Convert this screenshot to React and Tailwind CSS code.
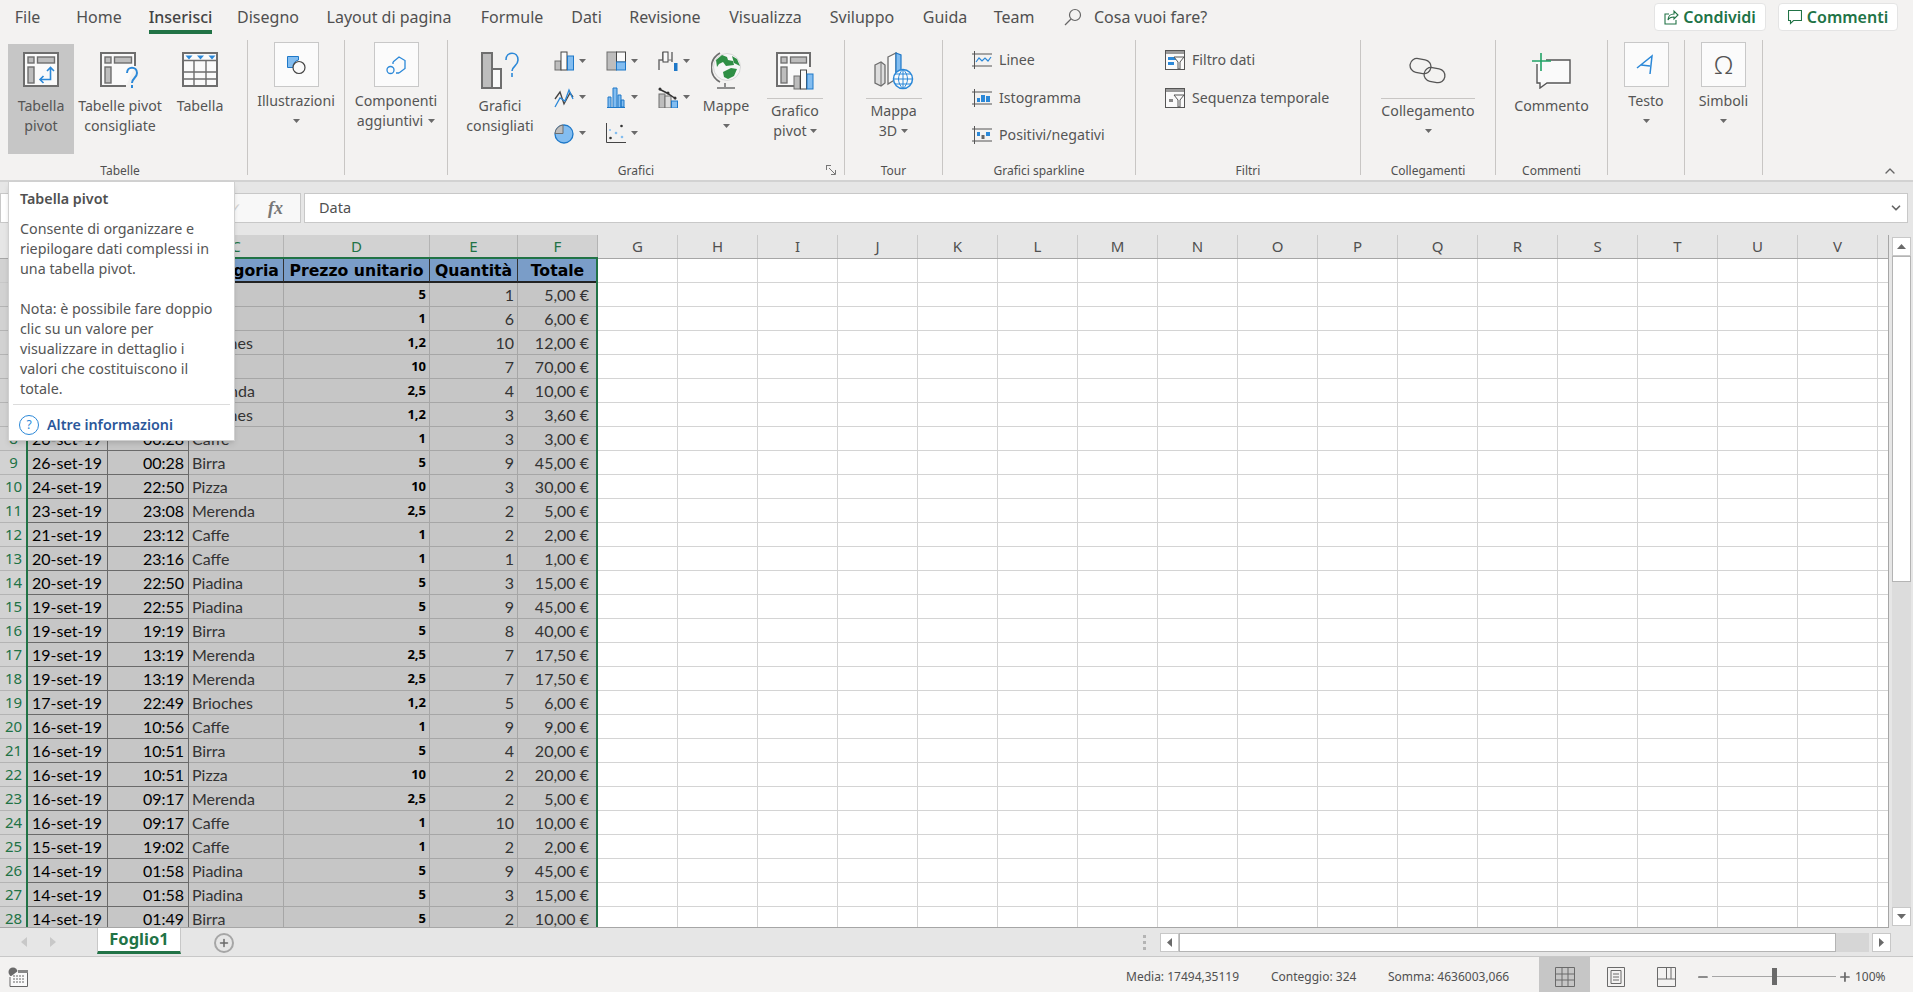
import { Plus, Minus, ChevronUp, ChevronDown } from 'lucide-react';

const GRAY = '#6e6e6e';
const LIGHT = '#bdbdbd';
const BLUE = '#1e78c8';
const SKY = '#83bdf0';

const tabs = [
  ['File', 'w-[55px]'],
  ['Home', 'w-[88px]'],
  ['Inserisci', 'w-[75px]'],
  ['Disegno', 'w-[100px]'],
  ['Layout di pagina', 'w-[142px]'],
  ['Formule', 'w-[104px]'],
  ['Dati', 'w-[45px]'],
  ['Revisione', 'w-[112px]'],
  ['Visualizza', 'w-[89px]'],
  ['Sviluppo', 'w-[104px]'],
  ['Guida', 'w-[62px]'],
  ['Team', 'w-[76px]'],
];

const rows = [
  ['', '', 'Birra', '5', '1', '5,00 €'],
  ['', '', 'Caffe', '1', '6', '6,00 €'],
  ['', '', 'Brioches', '1,2', '10', '12,00 €'],
  ['', '', 'Pizza', '10', '7', '70,00 €'],
  ['', '', 'Merenda', '2,5', '4', '10,00 €'],
  ['', '', 'Brioches', '1,2', '3', '3,60 €'],
  ['26-set-19', '00:28', 'Caffe', '1', '3', '3,00 €'],
  ['26-set-19', '00:28', 'Birra', '5', '9', '45,00 €'],
  ['24-set-19', '22:50', 'Pizza', '10', '3', '30,00 €'],
  ['23-set-19', '23:08', 'Merenda', '2,5', '2', '5,00 €'],
  ['21-set-19', '23:12', 'Caffe', '1', '2', '2,00 €'],
  ['20-set-19', '23:16', 'Caffe', '1', '1', '1,00 €'],
  ['20-set-19', '22:50', 'Piadina', '5', '3', '15,00 €'],
  ['19-set-19', '22:55', 'Piadina', '5', '9', '45,00 €'],
  ['19-set-19', '19:19', 'Birra', '5', '8', '40,00 €'],
  ['19-set-19', '13:19', 'Merenda', '2,5', '7', '17,50 €'],
  ['19-set-19', '13:19', 'Merenda', '2,5', '7', '17,50 €'],
  ['17-set-19', '22:49', 'Brioches', '1,2', '5', '6,00 €'],
  ['16-set-19', '10:56', 'Caffe', '1', '9', '9,00 €'],
  ['16-set-19', '10:51', 'Birra', '5', '4', '20,00 €'],
  ['16-set-19', '10:51', 'Pizza', '10', '2', '20,00 €'],
  ['16-set-19', '09:17', 'Merenda', '2,5', '2', '5,00 €'],
  ['16-set-19', '09:17', 'Caffe', '1', '10', '10,00 €'],
  ['15-set-19', '19:02', 'Caffe', '1', '2', '2,00 €'],
  ['14-set-19', '01:58', 'Piadina', '5', '9', '45,00 €'],
  ['14-set-19', '01:58', 'Piadina', '5', '3', '15,00 €'],
  ['14-set-19', '01:49', 'Birra', '5', '2', '10,00 €'],
];

const emptyCols = ['G', 'H', 'I', 'J', 'K', 'L', 'M', 'N', 'O', 'P', 'Q', 'R', 'S', 'T', 'U', 'V'];

const Caret = ({ className = '' }) => (
  <svg width="7" height="4" viewBox="0 0 7 4" className={`inline-block ${className}`}>
    <path d="M0 0h7L3.5 4z" fill="#6a6a6a" />
  </svg>
);

// ---- ribbon icons ----
const PivotIcon = () => (
  <svg width="36" height="36" viewBox="0 0 36 36" fill="none">
    <rect x="1" y="1" width="34" height="33" fill="#fafafa" stroke={GRAY} strokeWidth="2" />
    <rect x="5" y="5" width="6" height="6" fill={LIGHT} stroke={GRAY} strokeWidth="1.4" />
    <rect x="14.5" y="5" width="17" height="6" fill={LIGHT} stroke={GRAY} strokeWidth="1.4" />
    <rect x="5" y="15" width="6" height="16" fill={LIGHT} stroke={GRAY} strokeWidth="1.4" />
    <path d="M27.5 16v11.5H17M24 19l3.5-3.5L31 19M20.5 24L17 27.5l3.5 3.5" stroke="#2b88d8" strokeWidth="1.6" />
  </svg>
);

const PivotAskIcon = () => (
  <svg width="40" height="38" viewBox="0 0 40 38" fill="none">
    <path d="M35 14V1H1v33h25" fill="#fafafa" />
    <path d="M35 14V1H1v33h25" stroke={GRAY} strokeWidth="2" />
    <rect x="5" y="5" width="6" height="6" fill={LIGHT} stroke={GRAY} strokeWidth="1.4" />
    <rect x="14.5" y="5" width="17" height="6" fill={LIGHT} stroke={GRAY} strokeWidth="1.4" />
    <rect x="5" y="15" width="6" height="16" fill={LIGHT} stroke={GRAY} strokeWidth="1.4" />
    <path d="M27 21c0-7 10-7 10 0 0 5-5 5-5 10M32 33v3" stroke="#2b88d8" strokeWidth="2" />
  </svg>
);

const TableIcon = () => (
  <svg width="36" height="36" viewBox="0 0 36 36" fill="none">
    <rect x="1" y="1" width="34" height="33" fill="#fafafa" stroke={GRAY} strokeWidth="2" />
    <path d="M1 8.5h34M1 20h34M1 27h34M12 8.5V34M24 8.5V34" stroke={GRAY} strokeWidth="1.4" />
    <path d="M3.5 3.5h7l-3.5 4zM15 3.5h7l-3.5 4zM26.5 3.5h7l-3.5 4z" fill="#2b88d8" />
  </svg>
);

const ShapesIcon = () => (
  <svg width="20" height="20" viewBox="0 0 20 20" fill="none">
    <path d="M1.5 1.5h11v3.5a6 6 0 0 0-5 7.5H1.5z" fill={SKY} stroke={BLUE} />
    <circle cx="13" cy="12.5" r="6" fill="#fafafa" stroke="#444" strokeWidth="1.2" />
  </svg>
);

const AddinIcon = () => (
  <svg width="22" height="24" viewBox="0 0 22 24" fill="none" stroke="#2b88d8" strokeWidth="1.3">
    <path d="M8 9l6-5 6 3.5v8L14 20" />
    <path d="M8 9v2M14 20h-3" />
    <circle cx="5.5" cy="17" r="3.5" />
  </svg>
);

const RecommendedIcon = () => (
  <svg width="38" height="38" viewBox="0 0 38 38" fill="none">
    <rect x="1" y="1" width="10" height="35" fill={LIGHT} stroke={GRAY} strokeWidth="2" />
    <rect x="11" y="17" width="9" height="19" fill="#fafafa" stroke={GRAY} strokeWidth="2" />
    <path d="M25 8c0-9 12-9 12 0 0 6-6 6-6 11M31 21v4" stroke="#2b88d8" strokeWidth="1.6" />
  </svg>
);

const Bars = () => (
  <svg width="20" height="20" viewBox="0 0 20 20" fill="none">
    <rect x="1" y="10" width="6" height="9" fill={LIGHT} stroke={GRAY} />
    <rect x="7" y="1" width="6" height="18" fill="#fafafa" stroke="#444" />
    <rect x="13.5" y="5" width="6" height="14" fill={SKY} stroke={BLUE} />
  </svg>
);
const Tree = () => (
  <svg width="20" height="20" viewBox="0 0 20 20" fill="none">
    <rect x="1" y="1" width="9.5" height="18" fill={LIGHT} stroke={GRAY} />
    <rect x="10.5" y="1" width="9" height="10" fill="#fafafa" stroke="#444" />
    <rect x="10.5" y="11" width="9" height="8" fill={SKY} stroke={BLUE} />
  </svg>
);
const Waterfall = () => (
  <svg width="20" height="20" viewBox="0 0 20 20" fill="none">
    <path d="M1 19V9h4V1M14 1v10" stroke={GRAY} strokeWidth="1.5" />
    <rect x="5" y="1" width="5" height="10" fill="#fafafa" stroke="#444" />
    <path d="M10 9h4" stroke={GRAY} />
    <rect x="16" y="12" width="3.5" height="8" fill={BLUE} />
  </svg>
);
const LineMini = () => (
  <svg width="20" height="21" viewBox="0 0 20 21" fill="none" strokeWidth="1.3">
    <path d="M1 12l5-7 4 12 6-11 3 4" stroke="#444" />
    <path d="M1 20l5-9 5 3 4-11 4 9" stroke="#2b88d8" />
  </svg>
);
const Histogram = () => (
  <svg width="18" height="21" viewBox="0 0 18 21" fill="none">
    <path d="M1 20V10h3v10M6 20V1h4v19M11 20V8h3v12M14 20v-7h3v7z" fill={SKY} stroke={BLUE} />
    <path d="M0 20.5h18" stroke={BLUE} />
  </svg>
);
const Stat = () => (
  <svg width="20" height="21" viewBox="0 0 20 21" fill="none">
    <rect x="1" y="7" width="6" height="14" fill={LIGHT} stroke={GRAY} />
    <rect x="7" y="9" width="6" height="12" fill="#dcdcdc" stroke={GRAY} />
    <rect x="13.5" y="14" width="6" height="7" fill={SKY} stroke={BLUE} />
    <path d="M1 2l8 4 9 6" stroke="#333" strokeWidth="1.5" />
    <circle cx="2" cy="2" r="1.5" fill="#333" />
    <circle cx="10" cy="6" r="1.5" fill="#333" />
    <circle cx="17" cy="11" r="1.5" fill="#333" />
  </svg>
);
const Pie = () => (
  <svg width="20" height="21" viewBox="0 0 20 21" fill="none">
    <circle cx="10" cy="11" r="9" fill={SKY} stroke={BLUE} strokeWidth="1.3" />
    <path d="M9 2a9 9 0 0 0-8 8.5h8z" fill={LIGHT} stroke={GRAY} />
  </svg>
);
const Scatter = () => (
  <svg width="20" height="20" viewBox="0 0 20 20" fill="none">
    <path d="M.5 0v19.5H20" stroke="#444" />
    <circle cx="4.5" cy="15" r="1.3" fill="#333" />
    <circle cx="15.5" cy="3" r="1.3" fill="#333" />
    <circle cx="4" cy="7" r="1" fill={SKY} />
    <circle cx="10" cy="10" r="1.3" fill={SKY} />
    <circle cx="16" cy="14" r="1.3" fill={SKY} />
  </svg>
);
const GlobeIcon = () => (
  <svg width="30" height="37" viewBox="0 0 30 37" fill="none">
    <path d="M9 1a16.5 16.5 0 0 0 0 29" stroke={GRAY} strokeWidth="1.6" />
    <circle cx="16" cy="15" r="13.5" fill="#f6f6f6" stroke="#d8d8d8" />
    <path d="M5 8l6-5 5 2 1 3 5 1 1 4-8 1-3-4-4 2-2 3zM12 20l8-4 6 1-3 7-6 3-4-2zM21 4l5 3 3 7-6-3z" fill="#2f8f45" />
    <path d="M14 31v4M6 36h18" stroke={GRAY} strokeWidth="1.5" />
  </svg>
);
const PivotChartIcon = () => (
  <svg width="38" height="38" viewBox="0 0 38 38" fill="none">
    <path d="M18 34H1V1h33v14" fill="#fafafa" />
    <path d="M18 34H1V1h33v14" stroke={GRAY} strokeWidth="2" />
    <rect x="5" y="5" width="6" height="6" fill={LIGHT} stroke={GRAY} strokeWidth="1.3" />
    <rect x="14.5" y="5" width="16" height="6" fill={LIGHT} stroke={GRAY} strokeWidth="1.3" />
    <rect x="5" y="15" width="6" height="16" fill={LIGHT} stroke={GRAY} strokeWidth="1.3" />
    <rect x="18" y="24" width="6" height="13" fill={LIGHT} stroke={GRAY} />
    <rect x="24.5" y="18" width="6" height="19" fill="#fafafa" stroke="#444" />
    <rect x="31" y="22" width="6" height="15" fill={SKY} stroke={BLUE} />
  </svg>
);
const Map3DIcon = () => (
  <svg width="40" height="38" viewBox="0 0 40 38" fill="none">
    <path d="M1 13l6-3 4 3v18l-4 3-6-3z" fill="#ddd" stroke={GRAY} strokeWidth="1.3" />
    <path d="M7 10v24" stroke={GRAY} />
    <path d="M14 5l8-4v26l-8 5z" fill="#fafafa" stroke={GRAY} strokeWidth="1.3" />
    <path d="M22 1l5 2v20l-5 4z" fill={SKY} stroke={BLUE} strokeWidth="1.2" />
    <circle cx="29" cy="27" r="9.5" fill="#fafafa" stroke="#2b88d8" strokeWidth="1.5" />
    <path d="M19.5 27h19M29 17.5v19M21 22h16M21 32h16M29 17.5c-6 5-6 14 0 19M29 17.5c6 5 6 14 0 19" stroke="#2b88d8" />
  </svg>
);
const Spark = ({ children }) => (
  <svg width="20" height="18" viewBox="0 0 20 18" fill="none">
    <path d="M2.5 0v18M0 3h20M0 15h20" stroke="#555" />
    {children}
  </svg>
);
const FilterIcon = ({ dense }) => (
  <svg width="20" height="20" viewBox="0 0 20 20" fill="none">
    <rect x=".5" y=".5" width="19" height="19" fill="#fafafa" stroke="#555" />
    <rect x="1" y="1" width="18" height="3" fill="#9a9a9a" />
    {dense ? (
      <path d="M3 7h8v3H3zM3 12h6v3H3z" fill="#2b88d8" />
    ) : (
      <rect x="4" y="11" width="4" height="3" fill="#888" />
    )}
    <path d="M9 7h10l-4 5v7h-2v-7z" fill="#fafafa" stroke="#555" />
  </svg>
);
const LinkIcon = () => (
  <svg width="38" height="28" viewBox="0 0 38 28" fill="none" stroke="#555" strokeWidth="1.3" className="mt-[5px]">
    <rect x="1" y="2" width="21" height="14" rx="7" transform="rotate(10 11 9)" />
    <rect x="15" y="11" width="21" height="14" rx="7" transform="rotate(10 25 18)" />
  </svg>
);
const CommentIcon = () => (
  <svg width="40" height="37" viewBox="0 0 40 37" fill="none">
    <path d="M4 8h34v25H15l-8 3v-3H4z" fill="#fafafa" />
    <path d="M5 12v19h3v5l7-5h23V8H14" stroke="#555" strokeWidth="1.4" />
    <path d="M9 1v18M0 9h19" stroke="#21a366" strokeWidth="1.6" />
  </svg>
);
const ShareIcon = () => (
  <svg width="15" height="16" viewBox="0 0 15 16" fill="none" stroke="#217346" strokeWidth="1.1">
    <path d="M5 5H1v10h11v-4" />
    <path d="M4 11c0-4 3-6 6-6V2l4 4-4 4V8c-3 0-5 1-6 3z" />
  </svg>
);
const SmallComment = () => (
  <svg width="14" height="15" viewBox="0 0 14 15" fill="none" stroke="#217346" strokeWidth="1.1">
    <path d="M.5.5h13v10h-8l-3 3v-3h-2z" />
  </svg>
);

// ---- ribbon pieces ----
const Group = ({ width, label, labelPad = '', children, launcher }) => (
  <div className={`${width} relative flex h-[135px] shrink-0 flex-col border-r border-[#c8c6c4]`}>
    <div className="flex h-[117px] overflow-visible">{children}</div>
    <div className={`${labelPad} mt-auto h-[18px] text-center text-xs leading-[28px] text-[#505050]`}>{label}</div>
    {launcher}
  </div>
);

const BigButton = ({ icon, lines, width, active, arrow }) => (
  <div className={`${width} ${active ? 'bg-[#c6c6c6]' : ''} mt-1 flex h-[110px] flex-col items-center`}>
    <div className="flex h-[52px] items-start pt-2">{icon}</div>
    {lines.map((line) => (
      <div key={line} className="h-5 whitespace-nowrap leading-5">{line}</div>
    ))}
    {arrow && <div className="flex h-5 items-center"><Caret /></div>}
  </div>
);

const BoxButton = ({ icon, lines, width, arrow }) => (
  <div className={`${width} mt-[2px] flex flex-col items-center`}>
    <div className="flex h-[45px] w-[45px] items-center justify-center border border-[#c8c8c8] bg-[#fbfbfb]">{icon}</div>
    <div className="mt-1" />
    {lines.map((line) => (
      <div key={line} className="h-5 whitespace-nowrap leading-5">{line}</div>
    ))}
    {arrow && <div className="flex h-5 items-center"><Caret /></div>}
  </div>
);

const SplitButton = ({ icon, lines, width, rule, arrow }) => (
  <div className={`${width} mt-1 flex flex-col items-center`}>
    <div className="flex h-[54px] items-start pt-2">{icon}</div>
    <div className={`${rule} mb-[2px] h-px bg-[#c8c6c4]`} />
    {lines.map((line) => (
      <div key={line} className="h-5 whitespace-nowrap leading-5">{line}</div>
    ))}
    {arrow && <div className="flex h-5 items-center"><Caret /></div>}
  </div>
);

const MiniChart = ({ children }) => (
  <div className="flex h-[36px] items-center gap-[5px]">
    <div className="flex w-5 justify-center">{children}</div>
    <Caret />
  </div>
);

const Ribbon = () => (
  <div className="flex h-[140px] bg-[#f3f2f1] text-[14.2px] text-[#555]">
    <Group width="w-[248px]" label="Tabelle" labelPad="pr-[7px]">
      <div className="w-2" />
      <BigButton width="w-[66px]" active icon={<PivotIcon />} lines={['Tabella', 'pivot']} />
      <BigButton width="w-[92px]" icon={<PivotAskIcon />} lines={['Tabelle pivot', 'consigliate']} />
      <BigButton width="w-[68px]" icon={<TableIcon />} lines={['Tabella']} />
    </Group>
    <Group width="w-[97px]" label="">
      <BoxButton width="w-full" icon={<ShapesIcon />} lines={['Illustrazioni']} arrow />
    </Group>
    <Group width="w-[103px]" label="">
      <BoxButton
        width="w-full"
        icon={<AddinIcon />}
        lines={['Componenti', <span key="a" className="flex items-center gap-[5px]">aggiuntivi <Caret /></span>]}
      />
    </Group>
    <Group
      width="w-[397px]"
      label="Grafici"
      labelPad="pr-[20px]"
      launcher={
        <svg width="10" height="10" viewBox="0 0 10 10" fill="none" stroke="#777" className="absolute left-[378px] top-[125px]">
          <path d="M0 .5h5M.5 0v5M3 3l6 6M5 9.5h4.5V5" />
        </svg>
      }
    >
      <div className="w-3" />
      <BigButton width="w-[80px]" icon={<RecommendedIcon />} lines={['Grafici', 'consigliati']} />
      <div className="ml-[14px] grid h-[111px] grid-cols-[52px_52px_37px] grid-rows-3 pt-[3px]">
        <MiniChart><Bars /></MiniChart>
        <MiniChart><Tree /></MiniChart>
        <MiniChart><Waterfall /></MiniChart>
        <MiniChart><LineMini /></MiniChart>
        <MiniChart><Histogram /></MiniChart>
        <MiniChart><Stat /></MiniChart>
        <MiniChart><Pie /></MiniChart>
        <MiniChart><Scatter /></MiniChart>
      </div>
      <BigButton width="w-[62px]" icon={<GlobeIcon />} lines={['Mappe']} arrow />
      <SplitButton
        width="w-[76px]"
        rule="w-[56px]"
        icon={<PivotChartIcon />}
        lines={['Grafico', <span key="p" className="flex items-center gap-[3px]">pivot <Caret /></span>]}
      />
    </Group>
    <Group width="w-[98px]" label="Tour">
      <SplitButton
        width="w-full"
        rule="w-[56px]"
        icon={<Map3DIcon />}
        lines={['Mappa', <span key="m" className="flex items-center gap-[4px]">3D <Caret /></span>]}
      />
    </Group>
    <Group width="w-[193px]" label="Grafici sparkline">
      <div className="flex flex-col pl-[29px] pt-[1px]">
        <div className="flex h-[38px] items-center gap-[7px]">
          <Spark><path d="M4 11l3-4 3 3 3-3 3 3 3-4" stroke="#2b88d8" strokeWidth="1.2" /></Spark>Linee
        </div>
        <div className="flex h-[37px] items-center gap-[7px]">
          <Spark><path d="M5 9h3v4H5zM9 6h4v7H9zM14 7h4v6h-4z" fill="#2b88d8" /></Spark>Istogramma
        </div>
        <div className="flex h-[38px] items-center gap-[7px]">
          <Spark><path d="M5 6h3v4H5zM14 6h4v4h-4z" fill="#2b88d8" /><path d="M9.5 9h3v4h-3z" fill="#666" /></Spark>Positivi/negativi
        </div>
      </div>
    </Group>
    <Group width="w-[225px]" label="Filtri">
      <div className="flex flex-col pl-[29px] pt-[1px]">
        <div className="flex h-[38px] items-center gap-[7px]"><FilterIcon dense />Filtro dati</div>
        <div className="flex h-[37px] items-center gap-[7px]"><FilterIcon />Sequenza temporale</div>
      </div>
    </Group>
    <Group width="w-[135px]" label="Collegamenti">
      <SplitButton width="w-full" rule="w-[94px]" icon={<LinkIcon />} lines={['Collegamento']} arrow />
    </Group>
    <Group width="w-[112px]" label="Commenti">
      <BigButton width="w-full" icon={<CommentIcon />} lines={['Commento']} />
    </Group>
    <Group width="w-[77px]" label="">
      <BoxButton
        width="w-full"
        icon={
          <svg width="20" height="22" viewBox="0 0 20 22" fill="none" stroke="#2b88d8" strokeWidth="1.5">
            <path d="M1 14L16 2l-2 18M5 11l9 1" />
          </svg>
        }
        lines={['Testo']}
        arrow
      />
    </Group>
    <Group width="w-[78px]" label="">
      <BoxButton width="w-full" icon={<span className="text-[26px] font-light text-[#555]">Ω</span>} lines={['Simboli']} arrow />
    </Group>
    <div className="relative flex-1">
      <ChevronUp className="absolute left-[119px] top-[123px] h-4 w-4 text-[#666]" />
    </div>
  </div>
);

const TitleBar = () => (
  <div className="flex h-10 items-start bg-[#f3f2f1] text-base text-[#505050]">
    {tabs.map(([name, width]) => (
      <div key={name} className={`${width} flex h-[34px] justify-center`}>
        <div
          className={`h-[34px] whitespace-nowrap leading-[34px] ${
            name === 'Inserisci' ? 'border-b-4 border-[#217346] font-medium text-[#444]' : ''
          }`}
        >
          {name}
        </div>
      </div>
    ))}
    <div className="ml-3 flex h-[34px] items-center gap-3">
      <svg width="18" height="18" viewBox="0 0 18 18" fill="none" stroke="#666" strokeWidth="1.2">
        <circle cx="11" cy="7" r="5.5" />
        <path d="M7 11l-6 6" />
      </svg>
      <span>Cosa vuoi fare?</span>
    </div>
    <div className="ml-auto mr-[15px] mt-[3px] flex gap-3 font-semibold text-[#217346]">
      <div className="flex h-[28px] w-[112px] items-center justify-center gap-[4px] rounded-sm border border-[#e4e4e4] bg-white">
        <ShareIcon />Condividi
      </div>
      <div className="flex h-[28px] w-[120px] items-center justify-center gap-[5px] rounded-sm border border-[#e4e4e4] bg-white">
        <SmallComment />Commenti
      </div>
    </div>
  </div>
);

const FormulaBar = () => (
  <div className="flex h-[55px] items-start gap-[3px] border-t-2 border-[#d2d2d2] bg-[#e6e6e6] pt-[11px]">
    <div className="h-[30px] w-[115px] border border-[#c8c8c8] bg-white" />
    <div className="flex h-[30px] w-[183px] items-center justify-end gap-[26px] border border-[#c8c8c8] bg-[#f8f8f8] pr-[17px]">
      <span className="text-sm text-[#d0d0d0]">✓</span>
      <span className="font-['Liberation_Serif',serif] text-lg font-bold italic text-[#777]">fx</span>
    </div>
    <div className="mr-[5px] flex h-[30px] flex-1 items-center justify-between border border-[#c8c8c8] bg-white pl-[14px] pr-1 text-[14.5px] text-[#505050]">
      Data
      <ChevronDown className="h-[14px] w-[14px] text-[#666]" strokeWidth={3} />
    </div>
  </div>
);

const selectedCols = [
  { w: 'w-[81px]', h: 'A', cls: "justify-start pl-[5px] border-r-[#6a6a6a] border-b-[#6a6a6a] text-black font-['Lato',sans-serif] text-base", head: 'Data' },
  { w: 'w-[81px]', h: 'B', cls: "justify-end pr-[4px] border-r-[#6a6a6a] border-b-[#6a6a6a] text-black font-['Lato',sans-serif] text-base", head: 'Ora' },
  { w: 'w-[95px]', h: 'C', cls: "justify-start pl-[3px] text-[#333] font-['Lato',sans-serif] text-base", head: 'Categoria' },
  { w: 'w-[146px]', h: 'D', cls: "justify-end pr-[3px] text-black font-['Noto_Sans',sans-serif] text-[13px] font-bold", head: 'Prezzo unitario' },
  { w: 'w-[88px]', h: 'E', cls: "justify-end pr-[3px] text-[#333] font-['Lato',sans-serif] text-base", head: 'Quantità' },
  { w: 'w-[80px]', h: 'F', cls: "justify-end pr-[8px] text-[#333] font-['Lato',sans-serif] text-base", head: 'Totale' },
];

const EmptyCells = () => (
  <>
    {emptyCols.map((c) => (
      <div key={c} className="w-[80px] shrink-0 border-r border-b border-[#d4d4d4]" />
    ))}
    <div className="w-[11px] shrink-0 border-b border-[#d4d4d4]" />
  </>
);

const Sheet = () => (
  <div className="relative h-[693px] flex-1 overflow-hidden border-r border-b border-[#a6a6a6] bg-white">
    {/* column letters */}
    <div className="flex h-[24px] border-b border-[#a6a6a6] bg-[#e6e6e6] text-[15px]">
      <div className="w-[27px] shrink-0 border-r border-[#c8c8c8]" />
      {selectedCols.map((c) => (
        <div key={c.h} className={`${c.w} flex shrink-0 items-center justify-center border-r border-[#b4b4b4] bg-[#d2d2d2] text-[#217346]`}>
          {c.h}
        </div>
      ))}
      {emptyCols.map((c) => (
        <div key={c} className="flex w-[80px] shrink-0 items-center justify-center border-r border-[#c8c8c8] text-[#505050]">
          {c}
        </div>
      ))}
    </div>
    {/* header row */}
    <div className="flex h-[24px]">
      <div className="flex w-[27px] shrink-0 items-center justify-center border-b border-[#c8c8c8] bg-[#d2d2d2] text-[15px] text-[#217346]">1</div>
      {selectedCols.map((c) => (
        <div
          key={c.h}
          className={`${c.w} flex shrink-0 items-center justify-center whitespace-nowrap border-r border-b-2 border-r-[#333] border-b-[#222] bg-[#7a9dc8] pt-[2px] font-['DejaVu_Sans',sans-serif] text-[15.7px] font-bold text-black`}
        >
          {c.head}
        </div>
      ))}
      <EmptyCells />
    </div>
    {rows.map((row, i) => (
      <div key={i} className="flex h-[24px]">
        <div className="flex w-[27px] shrink-0 items-center justify-center border-b border-[#b4b4b4] bg-[#d2d2d2] text-[15px] text-[#217346]">
          {i + 2}
        </div>
        {selectedCols.map((c, j) => (
          <div
            key={c.h}
            className={`${c.w} ${c.cls} flex shrink-0 items-center whitespace-nowrap border-r border-b border-[#a6a6a6] bg-[#c6c6c6]`}
          >
            {row[j]}
          </div>
        ))}
        <EmptyCells />
      </div>
    ))}
    {/* selection outline */}
    <div className="pointer-events-none absolute left-[26px] top-[22px] h-[720px] w-[572px] border-2 border-[#217346]" />
  </div>
);

const ScrollV = () => (
  <div className="flex h-[693px] w-[24px] shrink-0 flex-col pl-[3px] pr-[2px]">
    <div className="mt-[2px] flex h-[19px] items-center justify-center border border-[#c8c8c8] bg-white">
      <svg width="9" height="5" viewBox="0 0 9 5"><path d="M0 5h9L4.5 0z" fill="#6a6a6a" /></svg>
    </div>
    <div className="h-[326px] border border-[#b4b4b4] bg-white" />
    <div className="flex-1 bg-[#dcdcdc]" />
    <div className="mb-[2px] flex h-[19px] items-center justify-center border border-[#c8c8c8] bg-white">
      <svg width="9" height="5" viewBox="0 0 9 5"><path d="M0 0h9L4.5 5z" fill="#6a6a6a" /></svg>
    </div>
  </div>
);

const SheetBar = () => (
  <div className="flex h-[29px] border-b border-[#c8c8c8] bg-[#e6e6e6]">
    <div className="flex w-[97px] items-center gap-[23px] pl-[21px]">
      <svg width="6" height="10" viewBox="0 0 6 10"><path d="M6 0v10L0 5z" fill="#c8c8c8" /></svg>
      <svg width="6" height="10" viewBox="0 0 6 10"><path d="M0 0v10l6-5z" fill="#c8c8c8" /></svg>
    </div>
    <div className="flex h-[26px] w-[84px] items-center justify-center border-x border-b-[3px] border-x-[#c8c8c8] border-b-[#217346] bg-white text-[16.5px] font-bold text-[#217346]">
      Foglio1
    </div>
    <div className="ml-[33px] mt-[5px] flex h-5 w-5 items-center justify-center rounded-full border-2 border-[#a6a6a6]">
      <Plus className="h-3 w-3 text-[#6a6a6a]" strokeWidth={3} />
    </div>
    <div className="ml-auto mr-[22px] mt-[5px] flex h-[19px] items-stretch">
      <div className="mr-[14px] flex w-[3px] flex-col justify-center gap-[3px]">
        <div className="h-[3px] bg-[#b4b4b4]" />
        <div className="h-[3px] bg-[#b4b4b4]" />
        <div className="h-[3px] bg-[#b4b4b4]" />
      </div>
      <div className="flex w-[19px] items-center justify-center border border-[#c8c8c8] bg-white">
        <svg width="5" height="9" viewBox="0 0 5 9"><path d="M5 0v9L0 4.5z" fill="#6a6a6a" /></svg>
      </div>
      <div className="w-[657px] border border-[#b4b4b4] bg-white" />
      <div className="w-[33px] bg-[#d6d6d6]" />
      <div className="ml-[3px] flex w-[19px] items-center justify-center border border-[#c8c8c8] bg-white">
        <svg width="5" height="9" viewBox="0 0 5 9"><path d="M0 0v9l5-4.5z" fill="#6a6a6a" /></svg>
      </div>
    </div>
  </div>
);

const StatusBar = () => (
  <div className="flex h-[35px] items-stretch bg-[#f3f2f1] text-xs text-[#505050]">
    <div className="flex w-[1126px] items-center pl-2 pt-1">
      <svg width="20" height="20" viewBox="0 0 20 20" fill="none">
        <circle cx="5" cy="5" r="4.5" fill="#6a6a6a" />
        <path d="M10 4h9.5v15.5H2V10" fill="#fafafa" stroke="#666" />
        <rect x="10" y="3" width="10" height="3" fill="#888" />
        <path d="M5 9h12M5 12h12M5 15h12" stroke="#666" strokeDasharray="2 1" />
      </svg>
    </div>
    <div className="flex w-[145px] items-center pt-1">Media: 17494,35119</div>
    <div className="flex w-[117px] items-center pt-1">Conteggio: 324</div>
    <div className="flex w-[151px] items-center pt-1">Somma: 4636003,066</div>
    <div className="flex w-[51px] items-center justify-center bg-[#c6c6c6] pt-1">
      <svg width="20" height="20" viewBox="0 0 20 20" fill="none" stroke="#6a6a6a">
        <path d="M.5.5h19v19H.5zM7 .5v19M13 .5v19M.5 7h19M.5 13h19" />
      </svg>
    </div>
    <div className="flex w-[51px] items-center justify-center pt-1">
      <svg width="18" height="20" viewBox="0 0 18 20" fill="none" stroke="#6a6a6a">
        <path d="M.5.5h17v19H.5zM4 3.5h10v13H4zM6 7h6M6 10h6M6 13h6" />
      </svg>
    </div>
    <div className="flex w-[50px] items-center justify-center pt-1">
      <svg width="19" height="20" viewBox="0 0 19 20" fill="none" stroke="#6a6a6a">
        <path d="M.5.5h18v19H.5zM9.5.5V12M.5 12h18M14 .5V12" />
      </svg>
    </div>
    <div className="flex w-[161px] items-center pl-[5px] pt-1">
      <Minus className="h-[14px] w-[14px] text-[#6a6a6a]" strokeWidth={3} />
      <div className="relative ml-[2px] h-px w-[125px] bg-[#a6a6a6]">
        <div className="absolute left-[60px] top-[-8px] h-[17px] w-[5px] bg-[#6a6a6a]" />
      </div>
      <Plus className="ml-[2px] h-[14px] w-[14px] text-[#6a6a6a]" strokeWidth={3} />
    </div>
    <div className="flex items-center pl-[3px] pt-1">100%</div>
  </div>
);

const Tooltip = () => (
  <div className="absolute left-2 top-[181px] h-[260px] w-[227px] border border-[#d0d0d0] bg-white text-[14.3px] text-[#555] shadow-md">
    <div className="pl-[11px] pt-[7px] font-semibold leading-5 text-[#505050]">Tabella pivot</div>
    <div className="pl-[11px] pt-[10px] leading-5">
      <p>Consente di organizzare e</p>
      <p>riepilogare dati complessi in</p>
      <p>una tabella pivot.</p>
      <p className="mt-5">Nota: è possibile fare doppio</p>
      <p>clic su un valore per</p>
      <p>visualizzare in dettaglio i</p>
      <p>valori che costituiscono il</p>
      <p>totale.</p>
    </div>
    <div className="mx-1 mt-[5px] border-t border-[#dcdcdc]" />
    <div className="flex items-center gap-[8px] pl-[10px] pt-[9px]">
      <div className="flex h-5 w-5 items-center justify-center rounded-full border border-[#2b88d8] text-xs text-[#2b88d8]">?</div>
      <span className="font-semibold text-[#2b579a]">Altre informazioni</span>
    </div>
  </div>
);

export default function App() {
  return (
    <div className="relative flex h-[992px] w-[1913px] flex-col overflow-hidden bg-[#f3f2f1] font-['Noto_Sans',sans-serif]">
      <TitleBar />
      <Ribbon />
      <FormulaBar />
      <div className="flex bg-[#e6e6e6]">
        <Sheet />
        <ScrollV />
      </div>
      <SheetBar />
      <StatusBar />
      <Tooltip />
    </div>
  );
}
